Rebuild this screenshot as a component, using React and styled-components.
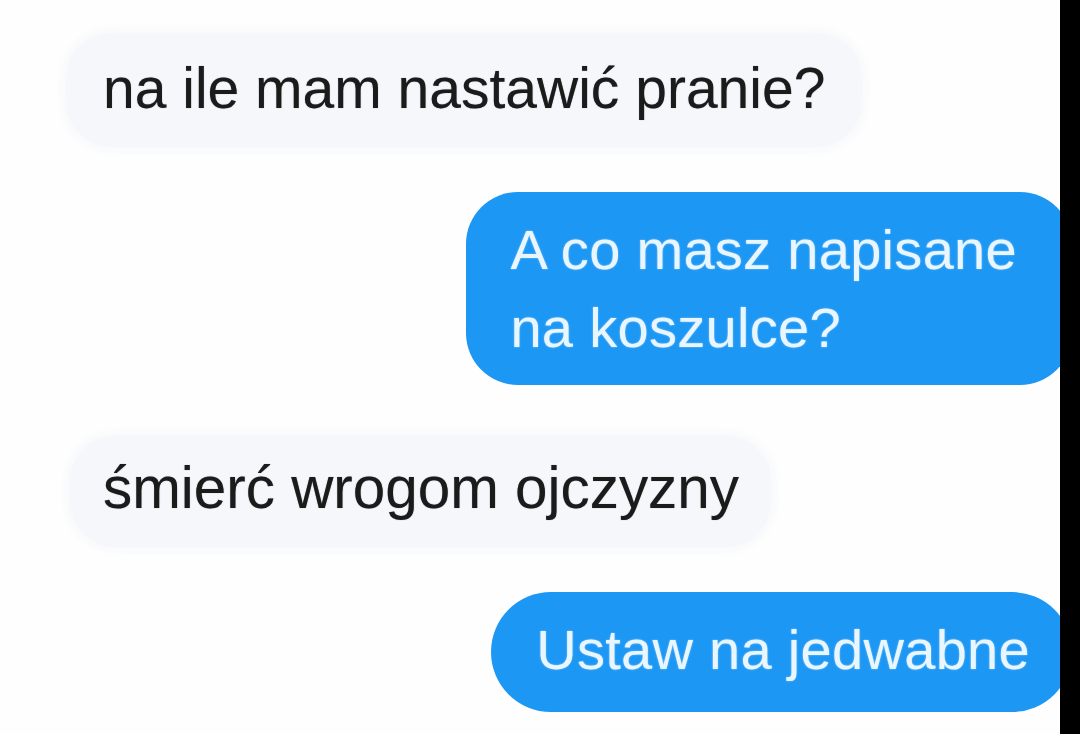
import React from "react";
import styled, { createGlobalStyle } from "styled-components";

const Global = createGlobalStyle`
  html, body { margin: 0; padding: 0; background: #ffffff; }
  body { width: 1080px; height: 734px; overflow: hidden; }
`;

const Screen = styled.div`
  display: flex;
  width: 1080px;
  height: 734px;
  background: #ffffff;
`;

const Chat = styled.div`
  flex: 1;
  display: flex;
  flex-direction: column;
  overflow: hidden;
  padding-top: 33px;
  background: #fefefe;
`;

const Edge = styled.div`
  width: 20px;
  background: #000000;
`;

const Bubble = styled.div`
  font-family: "Liberation Sans", Arial, sans-serif;
  font-size: ${(p) => p.$fs || 56}px;
  line-height: ${(p) => p.$lh}px;
  padding: ${(p) => p.$pad};
  margin-top: ${(p) => p.$mt}px;
  white-space: nowrap;
  letter-spacing: ${(p) => (p.$out ? "0.3px" : "0")};
  ${(p) =>
    p.$out
      ? `
    align-self: flex-end;
    margin-right: -12px;
    background: #1d97f4;
    color: #e9f6ff;
    border-radius: ${p.$radius}px;
    text-shadow: 0 0 2px rgba(210, 240, 255, 0.6);
  `
      : `
    align-self: flex-start;
    margin-left: ${p.$ml}px;
    background: #f6f7fa;
    color: #1b1b1b;
    border-radius: 46px;
    box-shadow: 0 0 10px 4px #f7f8fb;
    text-shadow: 0 0 1px rgba(0, 0, 0, 0.45);
  `}
`;

export default function App() {
  return (
    <>
      <Global />
      <Screen>
        <Chat>
          <Bubble $ml={66} $mt={0} $fs={57} $lh={64} $pad="23px 37px 27px 37px">
            na ile mam nastawić pranie?
          </Bubble>
          <Bubble $out $radius={52} $mt={45} $lh={78} $pad="19px 55px 18px 44px">
            A co masz napisane
            <br />
            na koszulce?
          </Bubble>
          <Bubble $ml={70} $mt={51} $fs={58.4} $lh={64} $pad="20px 32px 27px 33px">
            śmierć wrogom ojczyzny
          </Bubble>
          <Bubble $out $radius={60} $mt={45} $lh={64} $pad="26px 42px 30px 45px">
            Ustaw na jedwabne
          </Bubble>
        </Chat>
        <Edge />
      </Screen>
    </>
  );
}
